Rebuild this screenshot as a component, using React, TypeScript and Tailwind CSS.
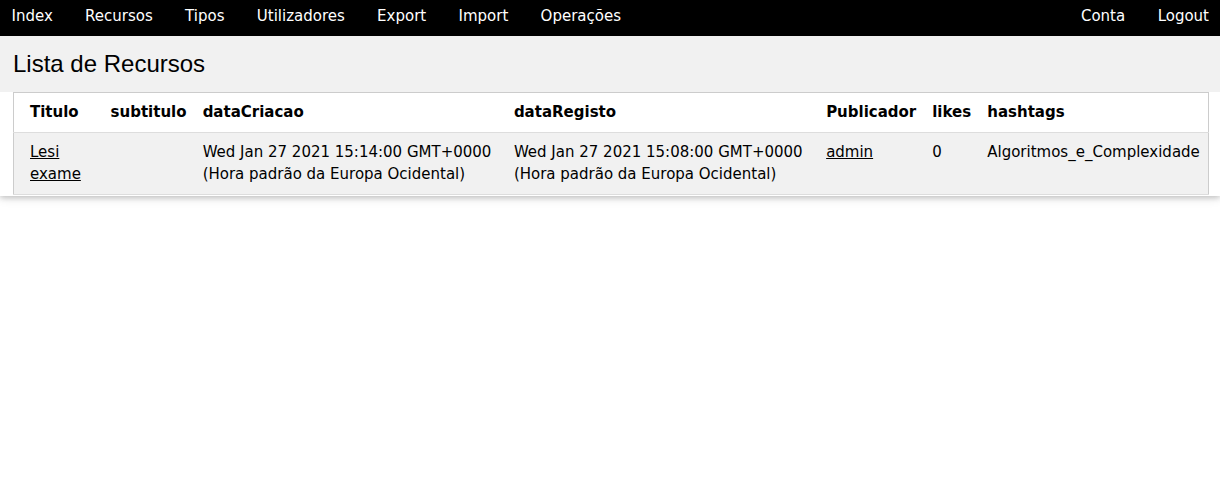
import React from "react";

const leftNav = ["Index", "Recursos", "Tipos", "Utilizadores", "Export", "Import", "Operações"];
const rightNav = ["Conta", "Logout"];

export default function App() {
  const body = { fontFamily: '"DejaVu Sans", Verdana, sans-serif' };
  return (
    <div className="min-h-[489px] bg-white text-[15px] leading-[22.5px] text-black" style={body}>
      <nav className="flex h-[36px] items-start justify-between bg-black pl-[11.5px] pr-[11px] pt-[4.5px] text-white">
        <div className="flex gap-[32.3px]">
          {leftNav.map((n) => (
            <a key={n} className="cursor-pointer">{n}</a>
          ))}
        </div>
        <div className="flex gap-[32.5px]">
          {rightNav.map((n) => (
            <a key={n} className="cursor-pointer">{n}</a>
          ))}
        </div>
      </nav>
      <div className="shadow-[0_2px_5px_0_rgba(0,0,0,0.16),0_2px_10px_0_rgba(0,0,0,0.12)]">
        <div className="bg-[#f1f1f1] px-[13px] py-[10px]">
          <h3
            className="m-0 text-[24px] font-normal leading-[36px]"
            style={{ fontFamily: '"Liberation Sans", Arial, sans-serif' }}
          >
            Lista de Recursos
          </h3>
        </div>
        <div className="bg-white pb-[1px] pl-[13px] pr-[11px]">
          <table className="w-[1196px] table-fixed border-collapse border border-[#cccccc]">
            <colgroup>
              <col className="w-[89px]" />
              <col className="w-[92px]" />
              <col className="w-[311px]" />
              <col className="w-[312px]" />
              <col className="w-[106px]" />
              <col className="w-[55px]" />
              <col className="w-[229px]" />
            </colgroup>
            <thead>
              <tr className="border-b border-[#dddddd] bg-white text-left">
                <th className="py-[8px] pl-[16px] pr-[8px] font-bold">Titulo</th>
                <th className="p-[8px] font-bold">subtitulo</th>
                <th className="p-[8px] font-bold">dataCriacao</th>
                <th className="p-[8px] font-bold">dataRegisto</th>
                <th className="p-[8px] font-bold">Publicador</th>
                <th className="p-[8px] font-bold">likes</th>
                <th className="p-[8px] font-bold">hashtags</th>
              </tr>
            </thead>
            <tbody>
              <tr className="border-b border-[#dddddd] bg-[#f1f1f1] align-top">
                <td className="py-[8px] pl-[16px] pr-[8px]">
                  <a className="cursor-pointer underline">Lesi exame</a>
                </td>
                <td className="p-[8px]"></td>
                <td className="p-[8px]">Wed Jan 27 2021 15:14:00 GMT+0000 (Hora padrão da Europa Ocidental)</td>
                <td className="p-[8px]">Wed Jan 27 2021 15:08:00 GMT+0000 (Hora padrão da Europa Ocidental)</td>
                <td className="p-[8px]">
                  <a className="cursor-pointer underline">admin</a>
                </td>
                <td className="p-[8px]">0</td>
                <td className="p-[8px]">Algoritmos_e_Complexidade</td>
              </tr>
            </tbody>
          </table>
        </div>
      </div>
    </div>
  );
}
